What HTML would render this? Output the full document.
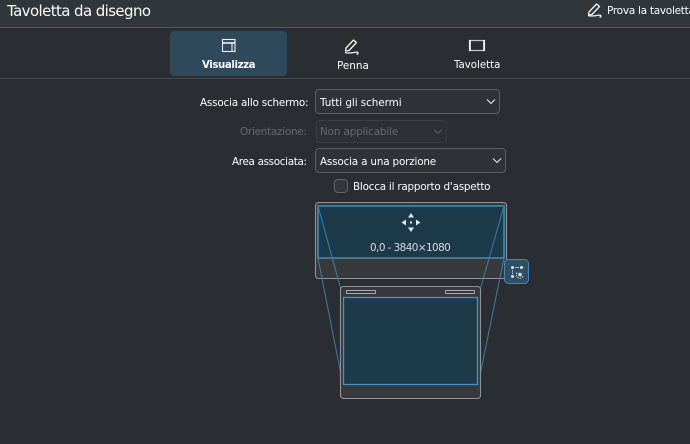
<!DOCTYPE html>
<html><head><meta charset="utf-8">
<style>
html,body{margin:0;padding:0;width:690px;height:444px;overflow:hidden;background:#2a2e32;}
body{position:relative;font-family:"DejaVu Sans",sans-serif;color:#fcfcfc;}
.t{position:absolute;white-space:nowrap;font-size:10.4px;line-height:14px;}
.c{position:absolute;box-sizing:border-box;border:1px solid #5a5f64;border-radius:4px;background:#2f3338;}
svg{position:absolute;left:0;top:0;}
</style></head><body>
<div style="position:absolute;left:0;top:0;width:690px;height:27px;background:#31363b;"></div>
<div style="position:absolute;left:0;top:27px;width:690px;height:1px;background:#54585c;"></div>
<div style="position:absolute;left:0;top:78px;width:690px;height:1px;background:#46494d;"></div>
<div style="position:absolute;left:170px;top:31px;width:117px;height:45px;background:#2e495b;border-radius:4px;"></div>

<div class="t" style="left:7px;top:1px;font-size:15px;line-height:20px;letter-spacing:-0.6px;">Tavoletta da disegno</div>
<div class="t" style="left:607px;top:4px;font-size:10.6px;letter-spacing:-0.32px;">Prova la tavoletta</div>
<div class="t" style="left:202px;top:59px;font-size:10.2px;font-weight:bold;letter-spacing:-0.4px;">Visualizza</div>
<div class="t" style="left:337px;top:59px;font-size:10.4px;">Penna</div>
<div class="t" style="left:454px;top:59px;font-size:10.2px;">Tavoletta</div>

<div class="t" style="left:200px;top:96px;letter-spacing:-0.2px;">Associa allo schermo:</div>
<div class="t" style="left:240px;top:125px;letter-spacing:-0.25px;color:#686c70;">Orientazione:</div>
<div class="t" style="left:232px;top:155px;letter-spacing:-0.33px;">Area associata:</div>
<div class="t" style="left:353px;top:180px;letter-spacing:-0.22px;">Blocca il rapporto d'aspetto</div>

<div class="c" style="left:315px;top:89px;width:185px;height:25px;"></div>
<div class="c" style="left:316px;top:120px;width:131px;height:23px;border-color:#3a3e42;background:#2c3034;"></div>
<div class="c" style="left:315px;top:148px;width:191px;height:25px;"></div>
<div class="c" style="left:334px;top:179px;width:14px;height:14px;background:#33373b;border-color:#60656a;"></div>

<div class="t" style="left:320px;top:96px;letter-spacing:-0.06px;">Tutti gli schermi</div>
<div class="t" style="left:320px;top:125px;letter-spacing:-0.14px;color:#686c70;">Non applicabile</div>
<div class="t" style="left:320px;top:155px;letter-spacing:-0.18px;">Associa a una porzione</div>

<svg width="690" height="444" viewBox="0 0 690 444" fill="none">
<path d="M487 99.5l4 4 4-4" stroke="#e4e5e6" stroke-width="1.1"/>
<path d="M434 129.500l4 4 4-4" stroke="#5c6064" stroke-width="1.1"/>
<path d="M493 158.500l4 4 4-4" stroke="#e4e5e6" stroke-width="1.1"/>

<g stroke="#f2f3f3" stroke-width="1.1">
<rect x="222.500" y="39.500" width="12.500" height="12"/>
<path d="M222.500 43h12.500" stroke-width="1.6"/>
<path d="M232 43v8.500" />
</g>
<g stroke="#f2f3f3" stroke-width="1.3" stroke-linejoin="round">
<path d="M346 48l7.500-8 3 2.500-7.500 8-3.500.5z"/>
<path d="M345 52.500c3 1 6 .5 9 0 1.500-.3 4-1 4 .8 0 1-1 .9-1.500.7"/>
</g>
<g stroke="#f2f3f3" stroke-width="1.3" stroke-linejoin="round">
<path d="M589 12l7.500-8 3 2.500-7.500 8-3.500.5z"/>
<path d="M588 15.500c3 1 6 .5 9 0 1.500-.3 4-1 4 .8 0 1-1 .9-1.500.7"/>
</g>
<rect x="469.500" y="40.500" width="15" height="10" stroke="#c5c7c8" stroke-width="1.200"/>
<path d="M470 40v11M484 40v11" stroke="#ffffff" stroke-width="1.600"/>

<rect x="315.500" y="202.500" width="191" height="76" rx="3" fill="#38393d" stroke="#8f9396" stroke-width="1.1"/>
<rect x="318" y="206" width="186" height="52" fill="#1d3a4b" stroke="#3f8fbc" stroke-width="1.500"/>

<g stroke="#3a7fa8" stroke-width="1">
<path d="M318 206L343 297M318 258L343 385M504 206L478 297M504 258L478 385"/>
</g>

<g fill="#e3e6e8">
<path d="M411 213l3 4.500h-6z"/>
<path d="M411 232l3-4.500h-6z"/>
<path d="M401.500 222.500l4.500-3v6z"/>
<path d="M420.500 222.500l-4.500-3v6z"/>
<rect x="410" y="221.500" width="2" height="2"/>
</g>

<rect x="340.500" y="286.500" width="140" height="112" rx="3" fill="#38393d" stroke="#8f9396" stroke-width="1.1"/>
<rect x="346.500" y="290.500" width="29" height="3" rx="0.500" fill="#34373b" stroke="#a9acae" stroke-width="1"/>
<rect x="445.500" y="290.500" width="29" height="3" rx="0.500" fill="#34373b" stroke="#a9acae" stroke-width="1"/>
<rect x="343.500" y="297.500" width="134" height="87" fill="#1d3a4b" stroke="#3f95c8" stroke-width="1.300"/>

<rect x="504.500" y="259.500" width="24" height="24" rx="4" fill="#2f4f66" stroke="#3d8bb8" stroke-width="1"/>
<g fill="#dfe2e4">
<circle cx="512.500" cy="267.500" r="1.500"/>
<circle cx="521.500" cy="267.500" r="1.500"/>
<circle cx="512.500" cy="276.500" r="1.500"/>
<circle cx="520" cy="274.500" r="1.800"/>
</g>
<path d="M512.500 270v4M515 267.500h4M517 272.500a3.500 3.500 0 1 0 6 3.500" stroke="#dfe2e4" stroke-width="0.900" stroke-dasharray="1.500 1"/>
</svg>
<div class="t" style="left:370px;top:241px;font-size:10.4px;letter-spacing:-0.55px;color:#d5dadd;">0,0 - 3840×1080</div>
</body></html>
